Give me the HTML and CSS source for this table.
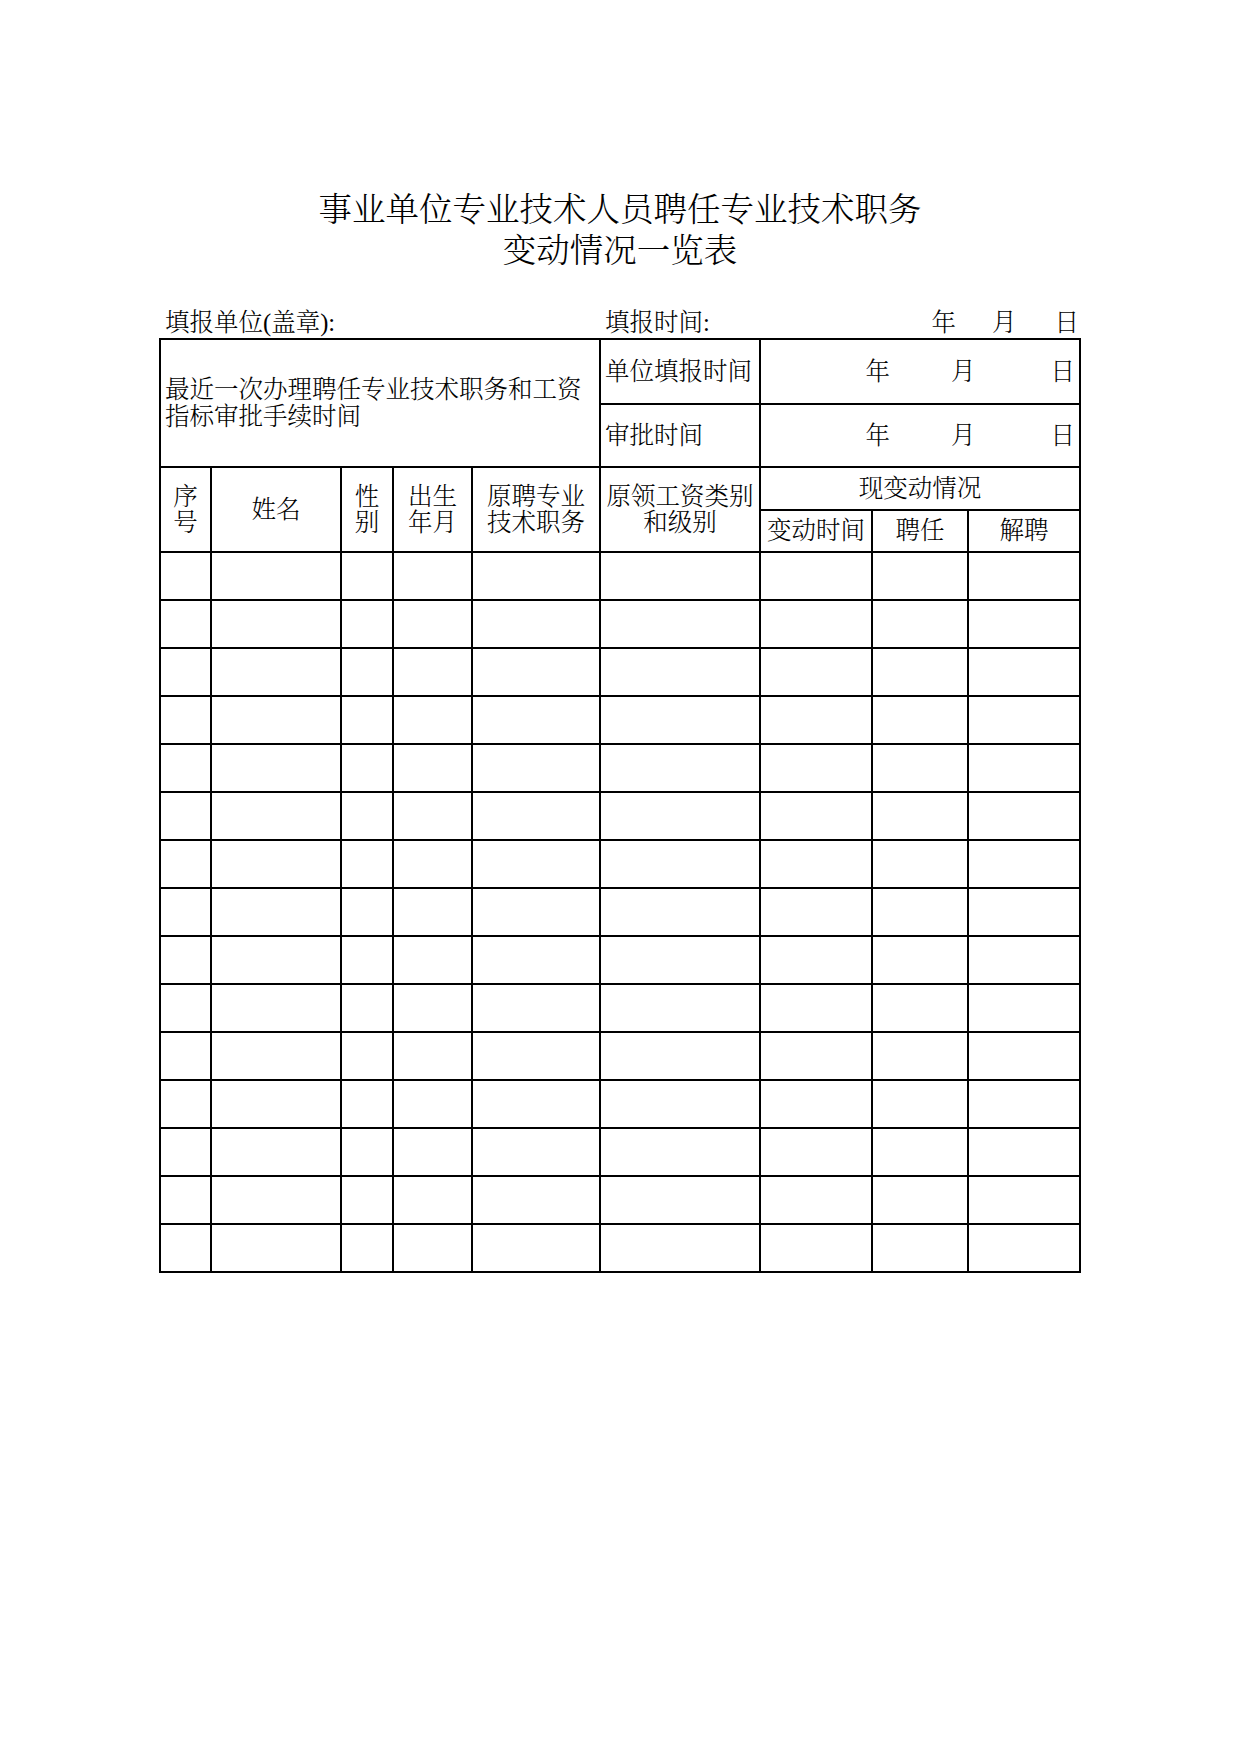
FILE: index.html
```html
<!DOCTYPE html>
<html lang="zh-CN">
<head>
<meta charset="utf-8">
<title>事业单位专业技术人员聘任专业技术职务变动情况一览表</title>
<link rel="stylesheet" href="styles.css">
</head>
<body>
<div class="page">
  <h1 class="title">事业单位专业技术人员聘任专业技术职务<br>变动情况一览表</h1>
  <div class="meta">
    <span class="meta-unit">填报单位(盖章):</span>
    <span class="meta-time">填报时间:</span>
    <span class="meta-date"><span>年</span><span class="m">月</span><span class="d">日</span></span>
  </div>
  <table class="sheet">
    <colgroup>
      <col class="c1"><col class="c2"><col class="c3"><col class="c4"><col class="c5">
      <col class="c6"><col class="c7"><col class="c8"><col class="c9">
    </colgroup>
    <tr class="r-top1">
      <td colspan="5" rowspan="2" class="left multi">最近一次办理聘任专业技术职务和工资<br>指标审批手续时间</td>
      <td class="left">单位填报时间</td>
      <td colspan="3" class="date"><span>年</span><span class="m">月</span><span class="d">日</span></td>
    </tr>
    <tr class="r-top2">
      <td class="left">审批时间</td>
      <td colspan="3" class="date"><span>年</span><span class="m">月</span><span class="d">日</span></td>
    </tr>
    <tr class="r-head1">
      <td rowspan="2" class="head">序<br>号</td>
      <td rowspan="2" class="head">姓名</td>
      <td rowspan="2" class="head">性<br>别</td>
      <td rowspan="2" class="head">出生<br>年月</td>
      <td rowspan="2" class="head">原聘专业<br>技术职务</td>
      <td rowspan="2" class="head">原领工资类别<br>和级别</td>
      <td colspan="3" class="head">现变动情况</td>
    </tr>
    <tr class="r-head2">
      <td class="head">变动时间</td>
      <td class="head">聘任</td>
      <td class="head">解聘</td>
    </tr>
    <tr class="r-data"><td></td><td></td><td></td><td></td><td></td><td></td><td></td><td></td><td></td></tr>
    <tr class="r-data"><td></td><td></td><td></td><td></td><td></td><td></td><td></td><td></td><td></td></tr>
    <tr class="r-data"><td></td><td></td><td></td><td></td><td></td><td></td><td></td><td></td><td></td></tr>
    <tr class="r-data"><td></td><td></td><td></td><td></td><td></td><td></td><td></td><td></td><td></td></tr>
    <tr class="r-data"><td></td><td></td><td></td><td></td><td></td><td></td><td></td><td></td><td></td></tr>
    <tr class="r-data"><td></td><td></td><td></td><td></td><td></td><td></td><td></td><td></td><td></td></tr>
    <tr class="r-data"><td></td><td></td><td></td><td></td><td></td><td></td><td></td><td></td><td></td></tr>
    <tr class="r-data"><td></td><td></td><td></td><td></td><td></td><td></td><td></td><td></td><td></td></tr>
    <tr class="r-data"><td></td><td></td><td></td><td></td><td></td><td></td><td></td><td></td><td></td></tr>
    <tr class="r-data"><td></td><td></td><td></td><td></td><td></td><td></td><td></td><td></td><td></td></tr>
    <tr class="r-data"><td></td><td></td><td></td><td></td><td></td><td></td><td></td><td></td><td></td></tr>
    <tr class="r-data"><td></td><td></td><td></td><td></td><td></td><td></td><td></td><td></td><td></td></tr>
    <tr class="r-data"><td></td><td></td><td></td><td></td><td></td><td></td><td></td><td></td><td></td></tr>
    <tr class="r-data"><td></td><td></td><td></td><td></td><td></td><td></td><td></td><td></td><td></td></tr>
    <tr class="r-data"><td></td><td></td><td></td><td></td><td></td><td></td><td></td><td></td><td></td></tr>
  </table>
</div>
</body>
</html>
```

FILE: styles.css
```css
html, body {
  margin: 0;
  padding: 0;
  background: #ffffff;
}

body {
  font-family: "Liberation Serif", "Noto Serif CJK SC", "Noto Sans CJK SC", serif;
  font-weight: 300;
  color: #000000;
}

.page {
  width: 1240px;
  min-height: 1754px;
  padding-top: 189px;
  box-sizing: border-box;
}

.title {
  margin: 0;
  font-size: 33.5px;
  line-height: 41px;
  font-weight: 300;
  text-align: center;
}

.meta {
  width: 920px;
  margin: 37px auto 0;
  display: flex;
  align-items: center;
  height: 30px;
  font-size: 24.5px;
  line-height: 30px;
  box-sizing: border-box;
  padding-left: 5px;
  padding-right: 1px;
}

.meta-unit {
  width: 440px;
  flex: none;
}

.meta-time {
  flex: 1;
}

.meta-date {
  display: flex;
}

.meta-date .m {
  margin-left: 36px;
}

.meta-date .d {
  margin-left: 38px;
}

.sheet {
  width: 920px;
  margin: 0 auto;
  border-collapse: collapse;
  table-layout: fixed;
  font-size: 24.5px;
  line-height: 25px;
}

.sheet td {
  border: 2px solid #000000;
  padding: 0;
  vertical-align: middle;
}

.c1 { width: 51px; }
.c2 { width: 130px; }
.c3 { width: 52px; }
.c4 { width: 79px; }
.c5 { width: 128px; }
.c6 { width: 160px; }
.c7 { width: 112px; }
.c8 { width: 96px; }
.c9 { width: 112px; }

.r-top1 { height: 65px; }
.r-top2 { height: 63px; }
.r-head1 { height: 43px; }
.r-head2 { height: 42px; }
.r-data { height: 48px; }

.sheet td.left {
  text-align: left;
  padding-left: 4px;
}

.sheet td.multi {
  line-height: 27px;
}

.sheet td.head {
  text-align: center;
  white-space: nowrap;
  line-height: 26px;
}

.sheet td.date {
  text-align: right;
  padding-right: 4px;
  white-space: nowrap;
}

.sheet td.date span {
  display: inline-block;
}

.sheet td.date .m {
  margin-left: 61px;
}

.sheet td.date .d {
  margin-left: 75px;
}
```
